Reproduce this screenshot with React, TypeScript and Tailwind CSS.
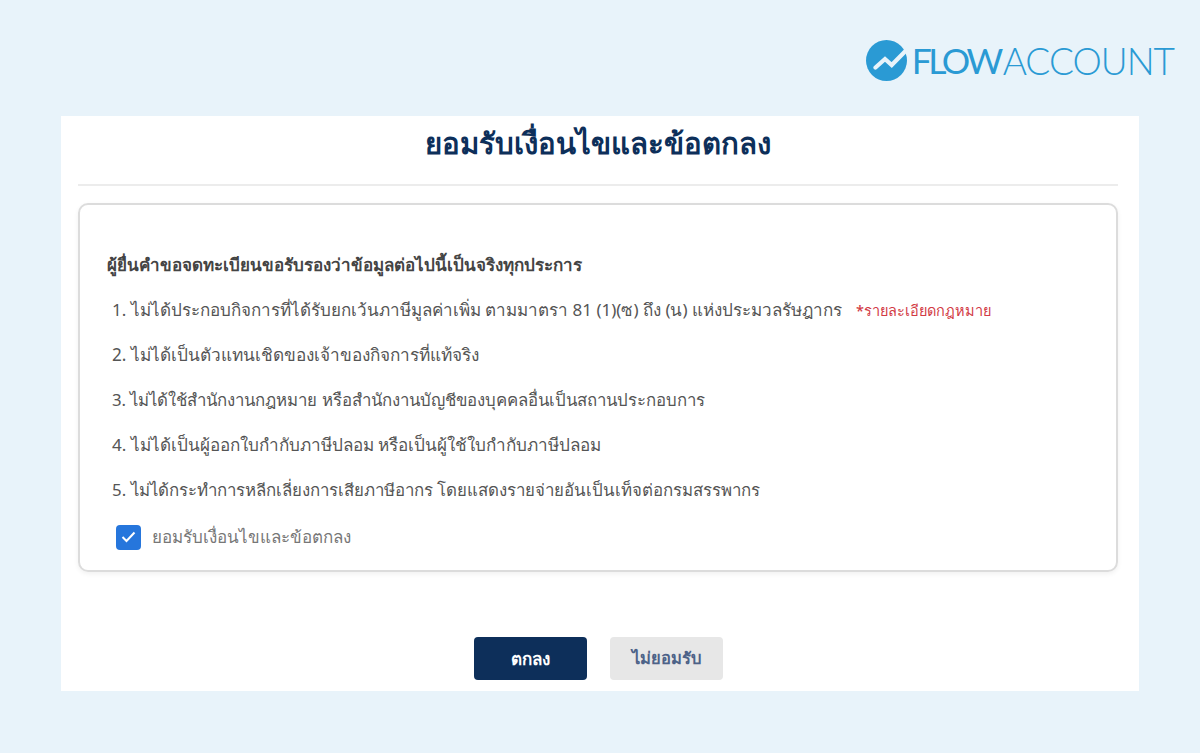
import React from "react";

const items = [
  { text: "ไม่ได้ประกอบกิจการที่ได้รับยกเว้นภาษีมูลค่าเพิ่ม ตามมาตรา 81 (1)(ซ) ถึง (น) แห่งประมวลรัษฎากร", size: "text-[17px]" },
  { text: "ไม่ได้เป็นตัวแทนเชิดของเจ้าของกิจการที่แท้จริง", size: "text-[17.2px]" },
  { text: "ไม่ได้ใช้สำนักงานกฎหมาย หรือสำนักงานบัญชีของบุคคลอื่นเป็นสถานประกอบการ", size: "text-[16.8px]" },
  { text: "ไม่ได้เป็นผู้ออกใบกำกับภาษีปลอม หรือเป็นผู้ใช้ใบกำกับภาษีปลอม", size: "text-[17.1px]" },
  { text: "ไม่ได้กระทำการหลีกเลี่ยงการเสียภาษีอากร โดยแสดงรายจ่ายอันเป็นเท็จต่อกรมสรรพากร", size: "text-[16.85px]" },
];

export default function App() {
  return (
    <div className="h-[753px] w-[1200px] overflow-hidden bg-[#e8f3fa] font-['Noto_Sans','Liberation_Sans',sans-serif]">
      <header className="flex h-[116px] items-start justify-end pr-[26px] pt-[40px]">
        <div className="flex items-center gap-[5px]">
          <svg width="41" height="41" viewBox="0 0 41 41" aria-hidden="true">
            <circle cx="20.5" cy="20.5" r="20.5" fill="#2a9ad4" />
            <path d="M9.5 27.5 L19 19 L25.7 25 L40 10.5" fill="none" stroke="#e8f3fa" strokeWidth="4.2" strokeLinecap="round" />
          </svg>
          <div className="flex items-center font-['Lato',sans-serif] text-[37px] leading-[41px] text-[#2a9ad4]">
            <span className="text-[35.5px] font-normal tracking-[-3.5px]">FLOW</span>
            <span className="ml-[3px] font-light tracking-[-1px]">ACCOUNT</span>
          </div>
        </div>
      </header>
      <main className="mx-[61px] flex h-[575px] flex-col bg-white pl-[17px] pr-[21px]">
        <h1 className="flex h-[70px] items-center justify-center border-b-2 border-[#ececec] pb-[13px] text-[29.4px] font-bold text-[#0d2f5a]">
          ยอมรับเงื่อนไขและข้อตกลง
        </h1>
        <section className="mt-[17px] h-[369px] rounded-[10px] border-2 border-[#dcdcdc] px-[27px] pt-[46px] shadow-[0_2px_5px_rgba(0,0,0,0.06)]">
          <h2 className="h-[28px] text-[17px] font-bold leading-[28px] text-[#444]">
            ผู้ยื่นคำขอจดทะเบียนขอรับรองว่าข้อมูลต่อไปนี้เป็นจริงทุกประการ
          </h2>
          <ol className="mt-[17px] flex flex-col gap-[17px] pl-[5px] leading-[28px] text-[#555]">
            {items.map((item, i) => (
              <li key={i} className={`flex h-[28px] items-center whitespace-nowrap ${item.size}`}>
                <span>{i + 1}. {item.text}</span>
                {i === 0 && <span className="ml-[14px] text-[14.5px] font-medium text-[#d23b45]">*รายละเอียดกฎหมาย</span>}
              </li>
            ))}
          </ol>
          <label className="mt-[19px] flex h-[28px] items-center gap-[11px] pl-[9px] text-[17px] font-medium text-[#777]">
            <span className="flex h-[25px] w-[25px] items-center justify-center rounded-[4px] bg-[#2676dc]">
              <svg width="15" height="12" viewBox="0 0 15 12" aria-hidden="true">
                <path d="M1.5 6 L5.5 10 L13.5 1.5" fill="none" stroke="#fff" strokeWidth="2" />
              </svg>
            </span>
            ยอมรับเงื่อนไขและข้อตกลง
          </label>
        </section>
        <div className="mt-[65px] flex justify-center gap-[23px]">
          <button className="h-[43px] w-[113px] rounded-[4px] bg-[#0d2f5a] text-[17px] font-bold text-white">ตกลง</button>
          <button className="h-[43px] w-[113px] rounded-[4px] bg-[#e7e7e7] text-[16.5px] font-bold text-[#4d6288]">ไม่ยอมรับ</button>
        </div>
      </main>
    </div>
  );
}
